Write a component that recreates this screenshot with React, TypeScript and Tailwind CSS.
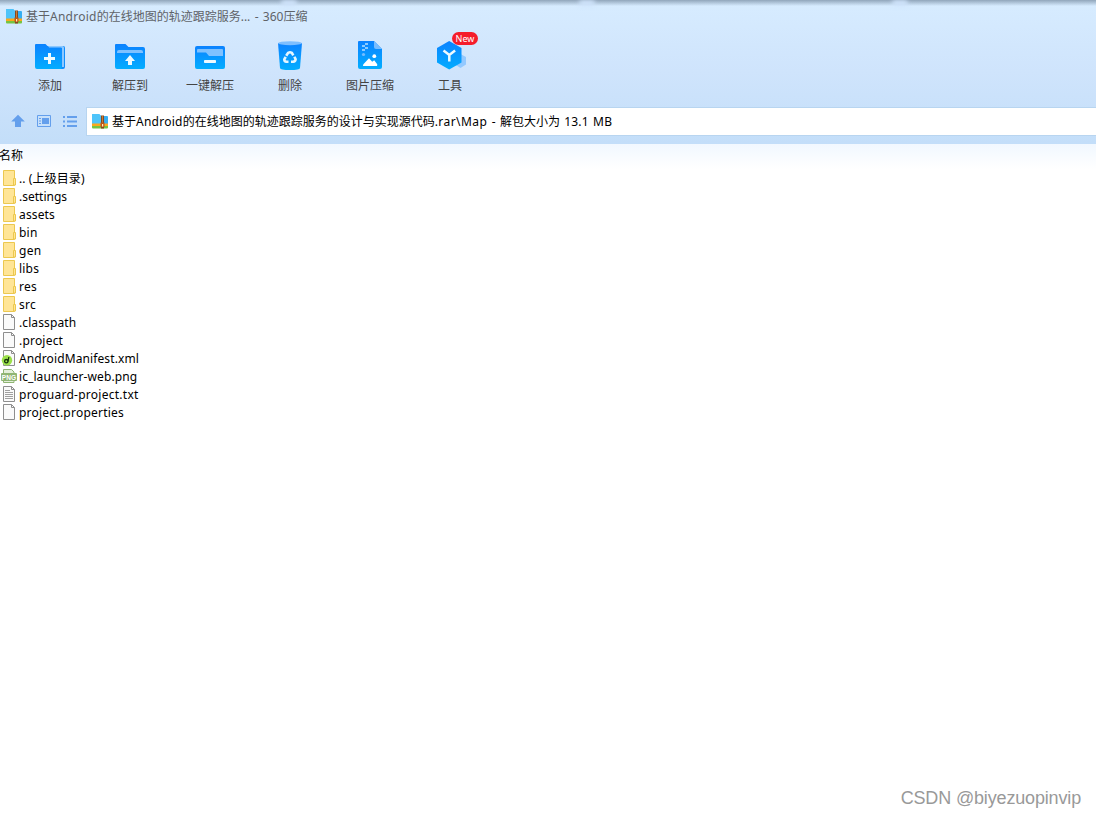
import type { ReactNode } from "react";
import clsx from "clsx";

type EntryKind = "folder" | "file" | "xml" | "png" | "text";

interface Entry {
  name: string;
  kind: EntryKind;
  tracking?: string;
}

const ENTRIES: Entry[] = [
  { name: ".. (上级目录)", kind: "folder", tracking: "tracking-[0.1px]" },
  { name: ".settings", kind: "folder" },
  { name: "assets", kind: "folder", tracking: "tracking-[0.15px]" },
  { name: "bin", kind: "folder", tracking: "tracking-[0.2px]" },
  { name: "gen", kind: "folder", tracking: "tracking-[0.25px]" },
  { name: "libs", kind: "folder", tracking: "tracking-[0.2px]" },
  { name: "res", kind: "folder", tracking: "tracking-[0.25px]" },
  { name: "src", kind: "folder", tracking: "tracking-[0.25px]" },
  { name: ".classpath", kind: "file", tracking: "tracking-[0.1px]" },
  { name: ".project", kind: "file", tracking: "tracking-[0.2px]" },
  { name: "AndroidManifest.xml", kind: "xml", tracking: "tracking-[0.11px]" },
  { name: "ic_launcher-web.png", kind: "png", tracking: "tracking-[0.08px]" },
  { name: "proguard-project.txt", kind: "text", tracking: "tracking-[0.26px]" },
  { name: "project.properties", kind: "file", tracking: "tracking-[0.23px]" },
];

function ArchiveIcon() {
  return (
    <svg width="16" height="16" viewBox="0 0 16 16" className="shrink-0">
      <path d="M0 1q0-1 1-1h6l2 2h6q1 0 1 1v8H0z" fill="#35aef2" />
      <path d="M0 1q0-1 1-1h6l2 2v8H0z" fill="#4ec4fa" />
      <path d="M0 9.500h16V12H0z" fill="#fba81c" />
      <path d="M0 12h16v1.500q0 1-1 1H1q-1 0-1-1z" fill="#76c442" />
      <path d="M9 1.500h3v13H9z" fill="#86481f" />
      <path d="M10 2h1v7h-1z" fill="#c97d35" />
      <path d="M8.500 8.500h4V13h-4z" fill="#b9571a" />
      <path d="M10 10h1.200v2.500H10z" fill="#fff0b8" />
    </svg>
  );
}

function AddIcon() {
  return (
    <svg width="32" height="32" viewBox="0 0 32 32">
      <path d="M13 6h16.500q1.500 0 1.500 2v19q0 2-2 2H13z" fill="#128efc" />
      <path d="M14 6h14.500q1.500 0 1.500 1.500V27h-2V8H15z" fill="#8cc8ff" />
      <path d="M1 5q0-1 1-1h9.500l3.500 3.500h12.500V29H3q-2 0-2-2z" fill="url(#blue)" />
      <path d="M10 18.500h11M15.500 13v11" stroke="#eefaff" strokeWidth="3" />
    </svg>
  );
}

function ExtractIcon() {
  return (
    <svg width="32" height="32" viewBox="0 0 32 32">
      <path d="M1 5q0-1 1-1h9.500l3 3H29q2 0 2 2v18q0 2-2 2H3q-2 0-2-2z" fill="url(#blue)" />
      <path d="M3 12q0-2 2-2h22q2 0 2 2v1H3z" fill="#7fc1ff" />
      <path d="M16 15l5 6h-3v4h-4v-4h-3z" fill="#eefaff" />
    </svg>
  );
}

function QuickExtractIcon() {
  return (
    <svg width="32" height="32" viewBox="0 0 32 32">
      <rect x="1" y="6" width="30" height="23" rx="2" fill="url(#blue)" />
      <path d="M3 10q0-1 1-1h24q1 0 1 1v6H15l-3-3.500H3z" fill="#7fc1ff" />
      <rect x="10" y="20" width="12" height="3" rx=".8" fill="#eefaff" />
    </svg>
  );
}

function DeleteIcon() {
  return (
    <svg width="32" height="32" viewBox="0 0 32 32">
      <path d="M4 3h24l-2 25q-.3 2-10 2T6 28z" fill="url(#blue)" />
      <ellipse cx="16" cy="3.200" rx="12" ry="2" fill="#7dbeff" />
      <g fill="none" stroke="#e4f6ff" strokeWidth="2.600">
        <path d="M12.200 15.800l2-3q1.800-1 3.600 0l1.500 2.500" />
        <path d="M20.400 16.800l1.200 2.500q-.3 2.200-2.400 2.500h-2.200" />
        <path d="M14.500 21.800h-2q-2.200-.4-2.200-2.400l1.400-2.600" />
      </g>
    </svg>
  );
}

function ImageZipIcon() {
  return (
    <svg width="32" height="32" viewBox="0 0 32 32">
      <path d="M4 2q0-1 1-1h15l8 8v18q0 2-2 2H6q-2 0-2-2z" fill="url(#blue)" />
      <path d="M20 1l8 8h-6q-2 0-2-2z" fill="#78bcff" />
      <path
        d="M11 3h3v2h-3zM8 5h3v2H8zM11 7h3v2h-3zM8 9h3v2H8z"
        fill="#8ccaff"
      />
      <circle cx="9.500" cy="14.500" r="1.600" fill="#75bdff" />
      <path d="M9.200 26q-.5-.8.2-1.700L15 18.300l3.200 3.400 2-1.500 3 4q.3 1.200-.3 1.800z" fill="#fff" />
      <circle cx="20.300" cy="16.200" r="1.900" fill="#fff" />
    </svg>
  );
}

function ToolsIcon() {
  return (
    <svg width="32" height="32" viewBox="0 0 32 32">
      <path d="M26.500 14l5.500 3v7.500L26.500 28 21 24.500V17z" fill="#93c9ff" />
      <path d="M15.200 1l12.300 7v14.500l-12.300 7-12.200-7V8z" fill="url(#blue)" />
      <path d="M9.500 10.500l5.800 4.500 5.800-4.500M15.300 15v6.500" fill="none" stroke="#eefaff" strokeWidth="2.500" />
    </svg>
  );
}

function EntryIcon({ kind }: { kind: EntryKind }) {
  if (kind === "folder") {
    return (
      <svg width="16" height="16" viewBox="0 0 16 16" className="shrink-0">
        <path d="M3.500.5h11v15h-11z" fill="#ffe596" stroke="#ecc84f" />
        <path d="M13.500 8.500h2v6.500h-2z" fill="#ffe596" stroke="#ecc84f" />
      </svg>
    );
  }
  if (kind === "png") {
    return (
      <svg width="17" height="16" viewBox="0 0 17 16" className="-mr-px shrink-0">
        <path d="M3.500 5V1.500h8L14 4v1M3.500 12v2.500H14V12" fill="#e4efdb" stroke="#8fb573" />
        <rect x="1" y="5" width="16" height="8" rx="1" fill="#8fb573" />
        <text
          x="1.800"
          y="11.700"
          fontSize="7.500"
          textLength="14.200"
          lengthAdjust="spacingAndGlyphs"
          className="fill-white font-bold [font-family:'Liberation_Sans',sans-serif]"
        >
          PNG
        </text>
      </svg>
    );
  }
  return (
    <svg width="16" height="16" viewBox="0 0 16 16" className="shrink-0">
      <path d="M3.500.5h8l3 3v12h-11z" fill="#fafafa" stroke="#8e8e8e" />
      <path d="M11.500.5v3h3" fill="none" stroke="#8e8e8e" />
      {kind === "text" && (
        <path d="M5 4.500h5M5 6.500h8M5 8.500h8M5 10.500h8M5 12.500h8" stroke="#a0a0a0" />
      )}
      {kind === "xml" && (
        <>
          <circle cx="7" cy="10.300" r="5.200" fill="#9be04a" />
          <circle cx="6.300" cy="11.200" r="1.700" fill="none" stroke="#16340e" strokeWidth="1.300" />
          <path d="M8 11.500l.8-4.500" stroke="#16340e" strokeWidth="1.300" />
        </>
      )}
    </svg>
  );
}

const TOOLS: { label: string; icon: ReactNode; isNew?: boolean }[] = [
  { label: "添加", icon: <AddIcon /> },
  { label: "解压到", icon: <ExtractIcon /> },
  { label: "一键解压", icon: <QuickExtractIcon /> },
  { label: "删除", icon: <DeleteIcon /> },
  { label: "图片压缩", icon: <ImageZipIcon /> },
  { label: "工具", icon: <ToolsIcon />, isNew: true },
];

function TitleBar() {
  return (
    <div className="flex h-[34px] items-center gap-1 pl-1.5 text-[#5f6368]">
      <ArchiveIcon />
      <span className="[word-spacing:1.2px]">
        基于<span className="tracking-[0.25px]">Android</span>的在线地图的轨迹跟踪服务... - 360压缩
      </span>
    </div>
  );
}

function Toolbar() {
  return (
    <nav className="flex h-[73px] pl-2.5 pt-1.5">
      {TOOLS.map((tool) => (
        <button key={tool.label} className="relative flex h-[60px] w-20 flex-col items-center text-[#444]">
          {tool.icon}
          <span className="mt-1.5 leading-4">{tool.label}</span>
          {tool.isNew && (
            <span className="absolute -top-2 left-[42px] h-[13px] w-[26px] rounded-full bg-[#f51d2b] text-center text-[9px] leading-[13px] text-white">
              New
            </span>
          )}
        </button>
      ))}
    </nav>
  );
}

function AddressBar() {
  return (
    <div className="flex h-[37px] items-start">
      <div className="flex h-7 w-[86px] items-center gap-3 pl-[11px] text-[#649fec]">
        <svg width="14" height="14" viewBox="0 0 14 14" fill="currentColor">
          <path d="M7 .8l6.800 6.700H10V13H4V7.500H.2z" />
        </svg>
        <svg width="14" height="12" viewBox="0 0 14 12" fill="none" stroke="currentColor">
          <path d="M.5.5h13v11H.5z" />
          <path d="M5 3h7v6H5z" fill="currentColor" stroke="none" />
          <path d="M2 3.500h2M2 6h2M2 8.500h2" />
        </svg>
        <svg width="14" height="11" viewBox="0 0 14 11" fill="currentColor">
          <path d="M0 0h2v2H0zM4 0h10v2H4zM0 4.500h2v2H0zM4 4.500h10v2H4zM0 9h2v2H0zM4 9h10v2H4z" />
        </svg>
      </div>
      <div className="flex h-[29px] flex-1 items-center gap-1 border border-r-0 border-[#b8d5f0] bg-white pl-[5px] text-black">
        <ArchiveIcon />
        <span className="[word-spacing:1.2px]">
          基于<span className="tracking-[0.25px]">Android</span>的在线地图的轨迹跟踪服务的设计与实现源代码
          <span className="tracking-[0.45px]">.rar\Map</span> - 解包大小为{" "}
          <span className="tracking-[0.15px]">13.1 MB</span>
        </span>
      </div>
    </div>
  );
}

export default function App() {
  return (
    <div className="relative h-[817px] w-[1096px] overflow-hidden whitespace-nowrap bg-white text-[12px] text-black [font-family:'Noto_Sans','Noto_Sans_CJK_SC',sans-serif]">
      <svg className="absolute h-0 w-0">
        <defs>
          <linearGradient id="blue" x1="0" y1="0" x2="0" y2="1">
            <stop offset="0" stopColor="#0c82ff" />
            <stop offset="1" stopColor="#03adff" />
          </linearGradient>
        </defs>
      </svg>
      <header className="h-36 bg-linear-to-b from-[#d7ecff] via-[#cfe4fc] to-[#c3def9]">
        {/* shadow of the window above, with the light gaps in it */}
        <div className="absolute inset-x-0 top-0 h-1.5 bg-linear-to-b from-[#91a6bb] to-transparent">
          <i className="absolute left-[281px] top-0 h-1.5 w-4 rounded-full bg-[#cfe3fb] blur-[2px]" />
          <i className="absolute left-[579px] top-0 h-1.5 w-4 rounded-full bg-[#cfe3fb] blur-[2px]" />
          <i className="absolute left-[892px] top-0 h-1.5 w-4 rounded-full bg-[#cfe3fb] blur-[2px]" />
        </div>
        <TitleBar />
        <Toolbar />
        <AddressBar />
      </header>
      <main>
        <div className="-ml-px h-[25px] bg-linear-to-b from-[#f1f8ff] to-white leading-[24px]">名称</div>
        <ul>
          {ENTRIES.map((entry) => (
            <li key={entry.name} className="flex h-[18px] items-center gap-[3px]">
              <EntryIcon kind={entry.kind} />
              <span className={clsx("pt-0.5 leading-[18px]", entry.tracking)}>{entry.name}</span>
            </li>
          ))}
        </ul>
      </main>
      <footer className="absolute bottom-2 right-[15px] text-[18px] leading-[22px] tracking-[-0.16px] text-[#999] [font-family:'Liberation_Sans',sans-serif]">
        CSDN @biyezuopinvip
      </footer>
    </div>
  );
}
